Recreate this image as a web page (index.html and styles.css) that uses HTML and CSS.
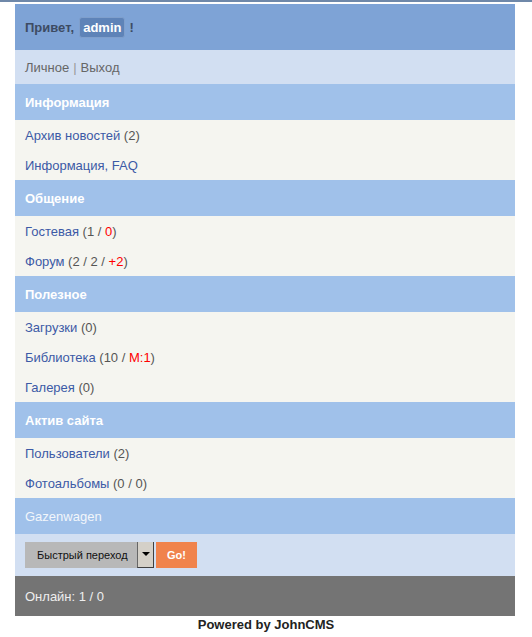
FILE: index.html
```html
<!DOCTYPE html>
<html lang="ru">

<head>
    <meta charset="UTF-8">
    <meta name="viewport" content="width=device-width, initial-scale=1.0">
    <title>JohnCMS</title>
    <link rel="stylesheet" href="styles.css">
</head>

<body>
    <div class="wrap">
        <div class="hello">Привет, <span class="nick">admin</span> !</div>
        <div class="userbar"><a href="#">Личное</a> <span class="sep">|</span> <a href="#">Выход</a></div>

        <div class="phdr">Информация</div>
        <div class="menu"><a href="#">Архив новостей</a> (2)</div>
        <div class="menu"><a href="#">Информация, FAQ</a></div>

        <div class="phdr">Общение</div>
        <div class="menu"><a href="#">Гостевая</a> (1 / <span class="red">0</span>)</div>
        <div class="menu"><a href="#">Форум</a> (2 / 2 / <span class="red">+2</span>)</div>

        <div class="phdr">Полезное</div>
        <div class="menu"><a href="#">Загрузки</a> (0)</div>
        <div class="menu"><a href="#">Библиотека</a> (10 / <span class="red">M:1</span>)</div>
        <div class="menu"><a href="#">Галерея</a> (0)</div>

        <div class="phdr">Актив сайта</div>
        <div class="menu"><a href="#">Пользователи</a> (2)</div>
        <div class="menu"><a href="#">Фотоальбомы</a> (0 / 0)</div>

        <div class="site">Gazenwagen</div>

        <form class="jump">
            <div class="select">
                <span class="select-text">Быстрый переход</span>
                <span class="arrow"></span>
            </div>
            <button type="button" class="go">Go!</button>
        </form>

        <div class="footer">Онлайн: 1 / 0</div>
    </div>
    <div class="powered">Powered by JohnCMS</div>
</body>

</html>
```

FILE: styles.css
```css
body {
    margin: 0;
    border-top: 2px solid #6f88a9;
    padding-top: 2px;
    font-family: "Liberation Sans", Arial, sans-serif;
    font-size: 13px;
    color: #555;
}

a {
    color: #3c5aa6;
    text-decoration: none;
}

.wrap {
    width: 500px;
    margin-left: 15px;
}

.hello {
    background: #7ea3d6;
    height: 46px;
    padding: 0 10px;
    display: flex;
    align-items: center;
    font-weight: bold;
    color: #3d4b63;
}

.nick {
    background: #5e83b8;
    color: #fff;
    border: 1px solid #7f9fcc;
    border-radius: 3px;
    padding: 2px 3px;
    margin: 0 4px 0 5px;
}

.userbar {
    background: #d2dff2;
    height: 34px;
    padding: 0 10px;
    display: flex;
    align-items: center;
    gap: 4px;
    color: #666;
}

.userbar a {
    color: #666;
}

.sep {
    color: #999;
}

.phdr {
    background: #a0c1ea;
    height: 36px;
    padding: 0 10px;
    display: flex;
    align-items: center;
    font-weight: bold;
    color: #fff;
}

.menu {
    background: #f5f5f0;
    height: 30px;
    padding: 0 10px;
    display: flex;
    align-items: center;
    white-space: pre;
}

.red {
    color: #f00;
}

.site {
    background: #a0c1ea;
    height: 36px;
    padding: 0 10px;
    display: flex;
    align-items: center;
    color: #f2f6fb;
}

.jump {
    background: #d2dff2;
    height: 42px;
    margin: 0;
    padding: 0 10px;
    display: flex;
    align-items: center;
    gap: 2px;
}

.select {
    display: flex;
    height: 26px;
    width: 129px;
    background: #b8b8b8;
    font-size: 11px;
    color: #111;
}

.select-text {
    flex: 1;
    display: flex;
    align-items: center;
    padding-left: 12px;
}

.arrow {
    width: 15px;
    background: #d4d0c8;
    border-left: 1px solid #666;
    border-right: 1px solid #404040;
    border-bottom: 1px solid #404040;
    position: relative;
}

.arrow::after {
    content: "";
    position: absolute;
    left: 4px;
    top: 10px;
    border-left: 4px solid transparent;
    border-right: 4px solid transparent;
    border-top: 4px solid #000;
}

.go {
    height: 26px;
    width: 41px;
    border: none;
    background: #f0834c;
    color: #fff;
    font-family: "Liberation Sans", Arial, sans-serif;
    font-size: 11px;
    font-weight: bold;
    padding: 0;
}

.footer {
    background: #747474;
    height: 40px;
    padding: 0 10px;
    display: flex;
    align-items: center;
    color: #eee;
}

.powered {
    width: 532px;
    text-align: center;
    font-weight: bold;
    color: #222;
    line-height: 17px;
}
```
